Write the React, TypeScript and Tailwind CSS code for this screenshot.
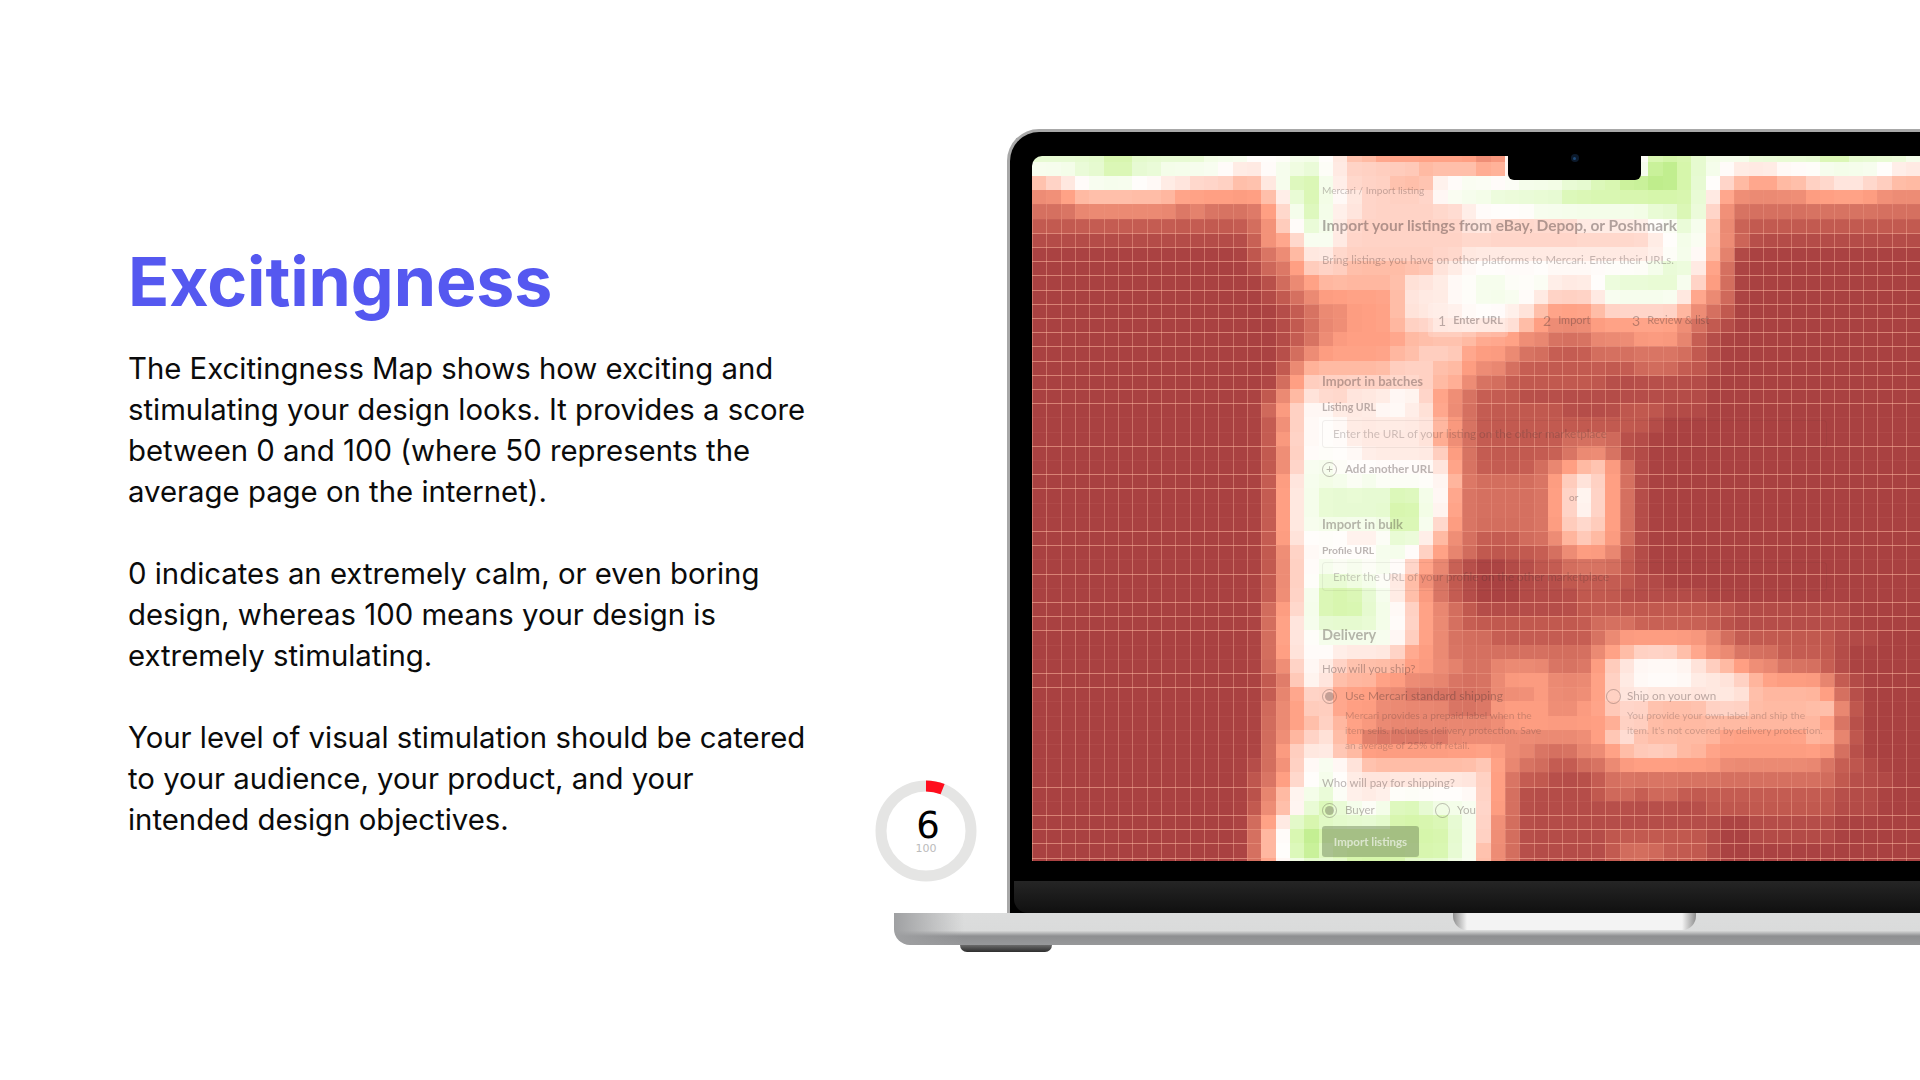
import React from "react";

const STOPS = [
  [0xa9, 0x41, 0x41], [0xb4, 0x4c, 0x48], [0xc2, 0x5a, 0x50], [0xd5, 0x70, 0x60], [0xeb, 0x8a, 0x73],
  [0xff, 0x9f, 0x83], [0xff, 0xba, 0xa3], [0xff, 0xd3, 0xc6], [0xff, 0xea, 0xe3], [0xff, 0xfd, 0xfb],
  [0xf4, 0xfd, 0xe9], [0xe6, 0xfa, 0xd0], [0xd6, 0xf6, 0xab], [0xbc, 0xec, 0x88],
];
const colorOf = (v: number) => {
  const lo = Math.max(0, Math.min(12, Math.floor(v)));
  const t = Math.max(0, Math.min(1, v - lo));
  const a = STOPS[lo];
  const b = STOPS[lo + 1];
  return `rgb(${Math.round(a[0] + (b[0] - a[0]) * t)},${Math.round(a[1] + (b[1] - a[1]) * t)},${Math.round(a[2] + (b[2] - a[2]) * t)})`;
};

const RAW = [
  "bbbbbccbbb bbaaa999aa 9866555555 5449999999 999cccbaaa bbbbbccbbbba",
  "aaabbccbba aaa9889aab 9877777666 6559999999 999ddcba98 88999aaaa988",
  "6789aaa998 8777668acc a877766699 aa99aaabbc cddddcb976 556677887766",
  "4456666666 55555568bc a98777779a aabbbbbccc ccccccb854 444455555444",
  "3334444444 34333357ac a887777777 89999aaaaa aaabbcb743 333333333333",
  "2222222222 222223479b a877777777 8877777788 88899ba642 222222222222",
  "1111111111 111112557a a877777777 7777777777 77789aa643 111111111111",
  "0000000000 0000023468 8777777777 8888888888 88889a9640 000000000000",
  "0000000000 0000013357 7766666688 9999999999 999abb8530 000000000000",
  "0000000000 0000001345 6666668889 9aa99a8889 bbbbba7530 000000000000",
  "0000000000 0000001234 5555568889 9aaa987778 aaaaa85430 000000000000",
  "0000000000 0000000123 4455568888 9998865556 7777764320 000000000000",
  "0000000000 0000000123 4455567788 8888654445 5555543210 000000000000",
  "0000000000 0000000123 4555556666 6555443334 4455542100 000000000000",
  "0000000000 0000000134 5555566777 5554332223 3333332100 000000000000",
  "0000000000 0000000246 6666677766 5443222222 2233322100 000000000000",
  "0000000000 0000000357 7777777766 4332222222 1111111000 000000000000",
  "0000000000 0000002468 7788899754 3222111111 1111111000 000000000000",
  "0000000000 0000003579 9888998854 3222222111 1222111000 000000000000",
  "0000000000 0000002479 9988888865 3222222222 2221000000 000000000000",
  "0000000000 0000002579 9988888854 3222222333 3110000000 000000000000",
  "0000000000 0000002479 9998888875 3222222344 3110000000 000000000000",
  "0000000000 000000247a a999999985 3222234567 5310000000 000000000000",
  "0000000000 000000258a aa9a999996 3333335787 5310000000 000000000000",
  "0000000000 000000258a bbbbbcca95 3333335797 5310000000 000000000000",
  "0000000000 000000258a bbbbbcca95 3333335797 5310000000 000000000000",
  "0000000000 000000258a aaaaacca75 3333335777 5310000000 000000000000",
  "0000000000 0000002589 99889bb864 3222334676 5310000000 000000000000",
  "0000000000 0000002479 9999aa9754 3222223455 4210000000 000000000000",
  "0000000000 0000002479 a9a9a97542 1001122333 3210000000 000000000000",
  "0000000000 0000002479 bbaa986432 1000111222 2211000000 000000000000",
  "0000000000 000000247a cccba86532 1000111122 2111111000 000000000000",
  "0000000000 000000357a cccba97543 2111111122 2222222221 111111100000",
  "0000000000 000000358a bbbba97543 2222222223 3322222211 111111100000",
  "0000000000 0000003589 aaaaa97543 3322222223 4555555432 222222111000",
  "0000000000 0000003589 9888875543 3333333334 5677765443 332222100000",
  "0000000000 0000003479 8766665544 3344443335 7899998765 443332100000",
  "0000000000 0000002379 8666554443 3345554445 7899998887 655554210000",
  "0000000000 0000002457 7555443333 3344454445 7888888888 666665310000",
  "0000000000 0000003457 7555444443 3355554455 7776666777 666667420000",
  "0000000000 0000003456 7655444444 4445555555 5776666666 666665310000",
  "0000000000 0000003467 8653333334 4444444445 7866666655 555566420000",
  "0000000000 0000003578 8665555555 5554433344 5677766555 555555310000",
  "0000000000 0000013479 a986666666 6754332233 4555555544 444443221000",
  "0000000000 0000023579 a988888888 8753221112 3333333333 333333211100",
  "0000000000 000001469a b988899999 9753111112 3323322222 222222111000",
  "0000000000 000002468b cba9accbaa a753111111 1111111222 222222111000",
  "0000000000 00000358cc bbbbbccccb a743111111 1111111100 111111000000",
  "0000000000 00000369cd cccccccccb a743111111 2222222100 111111000000",
  "0000000000 00000369cd bccccccccb a643111111 2333222100 000000000000",
  "0000000000 00000359ab bbccccbbba a643111111 2332222100 000000000000",
].map((r) => r.replace(/ /g, ""));

const ROWS = RAW.length;
const BASE = RAW.map((r) => Array.from({ length: 62 }, (_, i) => parseInt(r[i] ?? "0", 16)));
const val = (k: number, i: number) => BASE[Math.max(0, Math.min(ROWS - 1, k))][Math.max(0, Math.min(61, i))];
const SMOOTH = BASE.map((_, k) =>
  Array.from({ length: 62 }, (_, i) => {
    const side = val(k, i - 1) + val(k, i + 1) + val(k - 1, i) + val(k + 1, i);
    return val(k, i) * 0.6 + side * 0.1;
  })
);

const STRONG_ROWS = new Set([6, 7, 8, 9, 10, 11, 12, 13, 14, 15, 16, 17, 18, 21, 23, 24, 27, 28, 30, 32, 33, 34, 37, 38, 45, 47, 48, 49, 50]);
const CW = 14.33;
const CH = 14.2;
const rowTop = (k: number) => (k === 0 ? 0 : Math.round(5.8 + CH * (k - 1)));
const colLeft = (i: number) => Math.round(CW * i);
const seam = (v: number) => Math.max(0, Math.min(1, (4.6 - v) / 2.6));

function Heatmap() {
  const cells: React.ReactElement[] = [];
  const lines: React.ReactElement[] = [];
  SMOOTH.forEach((row, k) => {
    const y0 = rowTop(k);
    const y1 = k === ROWS - 1 ? 705 : rowTop(k + 1);
    for (let i = 0; i < 62; i++) {
      const v = row[i];
      const x0 = colLeft(i);
      const x1 = colLeft(i + 1);
      cells.push(<rect key={`c${k}-${i}`} x={x0} y={y0} width={x1 - x0} height={y1 - y0} fill={colorOf(v)} />);
      const s = seam(v);
      if (s > 0) {
        lines.push(<rect key={`v${k}-${i}`} x={x0} y={y0} width={1} height={y1 - y0} fill="#ffb8a0" opacity={0.4 * s} />);
        lines.push(<rect key={`h${k}-${i}`} x={x0} y={y0} width={x1 - x0} height={1} fill="#ffb8a0" opacity={(STRONG_ROWS.has(k) ? 0.55 : 0.08) * s} />);
      }
    }
  });
  return (
    <svg width={888} height={705} viewBox="0 0 888 705" shapeRendering="crispEdges" className="block">
      {cells}
      {lines}
    </svg>
  );
}

function Radio({ on }: { on?: boolean }) {
  return (
    <span className="flex h-[15px] w-[15px] shrink-0 items-center justify-center rounded-full border border-[#3c2f2f]/30">
      {on && <span className="h-[9px] w-[9px] rounded-full bg-[#3c2f2f]/30" />}
    </span>
  );
}

function MockPage() {
  return (
    <div className="absolute inset-0 flex flex-col pl-[290px] pt-[27px] font-['Lato',sans-serif] text-[#3c2f2f]/35 blur-[0.3px]">
      <div className="flex h-[16px] items-center whitespace-nowrap text-[10.1px] text-[#3c2f2f]/30">Mercari / Import listing</div>
      <div className="mt-[17px] flex h-[20px] items-center whitespace-nowrap text-[15.5px] font-bold text-[#3c2f2f]/40">Import your listings from eBay, Depop, or Poshmark</div>
      <div className="mt-[16px] flex h-[16px] items-center whitespace-nowrap text-[11.4px] text-[#3c2f2f]/30">Bring listings you have on other platforms to Mercari. Enter their URLs.</div>
      <div className="ml-[106px] mt-[35px] flex h-[34px] items-center text-[11px]">
        <div className="flex h-full w-[115px] items-center">
          <span className="flex h-full w-[80px] items-center gap-[7px] rounded-[3px] bg-white/20 pl-[10px] font-bold">
            <span className="text-[14px] font-normal">1</span>Enter URL
          </span>
        </div>
        <div className="flex w-[89px] items-center gap-[7px]"><span className="text-[14px]">2</span>Import</div>
        <div className="flex items-center gap-[7px] whitespace-nowrap"><span className="text-[14px]">3</span>Review &amp; list</div>
      </div>
      <div className="mt-[36px] flex h-[18px] items-center text-[13px] font-bold">Import in batches</div>
      <div className="mt-[10px] flex h-[14px] items-center text-[10.6px] font-bold">Listing URL</div>
      <div className="mt-[5px] flex h-[28px] w-[505px] items-center rounded-[3px] border border-[#3c2f2f]/[0.07] pl-[10px] text-[11.6px] text-[#3c2f2f]/25 whitespace-nowrap">Enter the URL of your listing on the other marketplace</div>
      <div className="mt-[13px] flex h-[16px] items-center gap-[8px] text-[11.5px] font-bold">
        <span className="flex h-[15px] w-[15px] items-center justify-center rounded-full border border-[#3c2f2f]/30 text-[12px] font-normal leading-none">+</span>
        Add another URL
      </div>
      <div className="mt-[39px] flex h-[18px] items-center text-[13px] font-bold">Import in bulk</div>
      <div className="mt-[10px] flex h-[14px] items-center text-[10.3px] font-bold">Profile URL</div>
      <div className="mt-[4px] flex h-[29px] w-[505px] items-center rounded-[3px] border border-[#3c2f2f]/[0.07] pl-[10px] text-[11.6px] text-[#3c2f2f]/25 whitespace-nowrap">Enter the URL of your profile on the other marketplace</div>
      <div className="mt-[34px] flex h-[20px] items-center text-[14.5px] font-bold">Delivery</div>
      <div className="mt-[16px] flex h-[16px] items-center text-[11.5px]">How will you ship?</div>
      <div className="mt-[11px] flex items-start">
        <div className="w-[284px]">
          <div className="flex h-[16px] items-center gap-[8px] text-[11.9px] whitespace-nowrap"><Radio on />Use Mercari standard shipping</div>
          <div className="ml-[23px] mt-[4px] text-[10.2px] leading-[15px] text-[#3c2f2f]/25">Mercari provides a prepaid label when the<br />item sells. Includes delivery protection. Save<br />an average of 25% off retail.</div>
        </div>
        <div>
          <div className="flex h-[16px] items-center gap-[6px] text-[11.7px] whitespace-nowrap"><Radio />Ship on your own</div>
          <div className="ml-[21px] mt-[4px] whitespace-nowrap text-[10.2px] leading-[15px] text-[#3c2f2f]/25">You provide your own label and ship the<br />item. It's not covered by delivery protection.</div>
        </div>
      </div>
      <div className="mt-[22px] flex h-[16px] items-center text-[11.5px]">Who will pay for shipping?</div>
      <div className="mt-[11px] flex h-[16px] items-center text-[11.5px]">
        <div className="flex w-[113px] items-center gap-[8px]"><Radio on />Buyer</div>
        <div className="flex items-center gap-[7px]"><Radio />You</div>
      </div>
      <div className="mt-[8px] flex h-[31px] w-[97px] items-center justify-center rounded-[3px] bg-[#5a6e46]/40 text-[11.5px] font-bold text-white/60">Import listings</div>
      <div className="absolute left-[537px] top-[334px] text-[10px]">or</div>
    </div>
  );
}

function Gauge() {
  return (
    <div className="absolute left-[-19px] top-[780px] h-[102px] w-[102px]">
      <svg width={102} height={102} viewBox="0 0 102 102" className="block">
        <circle cx={51} cy={51} r={45} fill="none" stroke="#e5e5e4" strokeWidth={11} />
        <path d="M51 6 A45 45 0 0 1 67.6 9.2" fill="none" stroke="#ff0d1d" strokeWidth={11} />
      </svg>
      <div className="absolute inset-0 flex flex-col items-center pt-[29px] font-['DejaVu_Sans',sans-serif]">
        <span className="ml-[4px] h-[33px] text-[37px] leading-[33px] text-black">6</span>
        <span className="text-[11px] leading-[13px] text-[#bbbbbb]">100</span>
      </div>
    </div>
  );
}

export default function App() {
  return (
    <main className="flex h-[1080px] w-full overflow-hidden bg-white">
      <section className="w-[894px] shrink-0 pl-[128px] pt-[236px] font-['Inter',sans-serif]">
        <h1 className="text-[68px] font-bold leading-[90px] tracking-[-0.1px] text-[#5558f0]">Excitingness</h1>
        <div className="mt-[22px] w-[700px] text-[29.33px] leading-[41px] text-[#0b0b0b]">
          <p>The Excitingness Map shows how exciting and<br />stimulating your design looks. It provides a score<br />between 0 and 100 (where 50 represents the<br />average page on the internet).</p>
          <p className="mt-[41px]">0 indicates an extremely calm, or even boring<br />design, whereas 100 means your design is<br />extremely stimulating.</p>
          <p className="mt-[41px]">Your level of visual stimulation should be catered<br />to your audience, your product, and your<br />intended design objectives.</p>
        </div>
      </section>
      <section className="relative min-w-0 flex-1 pt-[129px]">
        <div className="relative ml-[113px] h-[784px] rounded-tl-[32px] border-l-[3px] border-t-[3px] border-[#a8a8a8] bg-black pt-[24px]">
          <div className="relative ml-[22px] h-[705px] w-[888px] overflow-hidden rounded-tl-[10px]">
            <Heatmap />
            <MockPage />
          </div>
          <div className="mt-[20px] ml-[4px] h-[32px] rounded-bl-[14px] bg-gradient-to-b from-[#252525] to-[#101010]" />
          <div className="absolute left-[498px] top-[18px] flex h-[30px] w-[133px] justify-center rounded-b-[6px] bg-black pt-[4px]">
            <span className="flex h-[8px] w-[8px] items-center justify-center rounded-full bg-[#0c1a2c]">
              <span className="h-[3px] w-[3px] rounded-full bg-[#1e4a78]" />
            </span>
          </div>
        </div>
        <div className="relative h-[32px] rounded-bl-[16px] bg-[linear-gradient(90deg,#9fa0a2_0px,rgba(200,200,200,0)_70px),linear-gradient(180deg,#dcdddd_0%,#dadbdb_55%,#8e8f91_72%,#97989a_100%)]">
          <div className="absolute left-[559px] top-0 h-[17px] w-[243px] rounded-b-[14px] bg-[linear-gradient(90deg,#8f8f8f_0px,#f3f3f3_14px,#f3f3f3_229px,#8f8f8f_243px)]" />
        </div>
        <div className="ml-[66px] h-[7px] w-[92px] rounded-b-[8px] bg-gradient-to-b from-[#6b6b6b] to-[#2e2e2e]" />
        <Gauge />
      </section>
    </main>
  );
}
